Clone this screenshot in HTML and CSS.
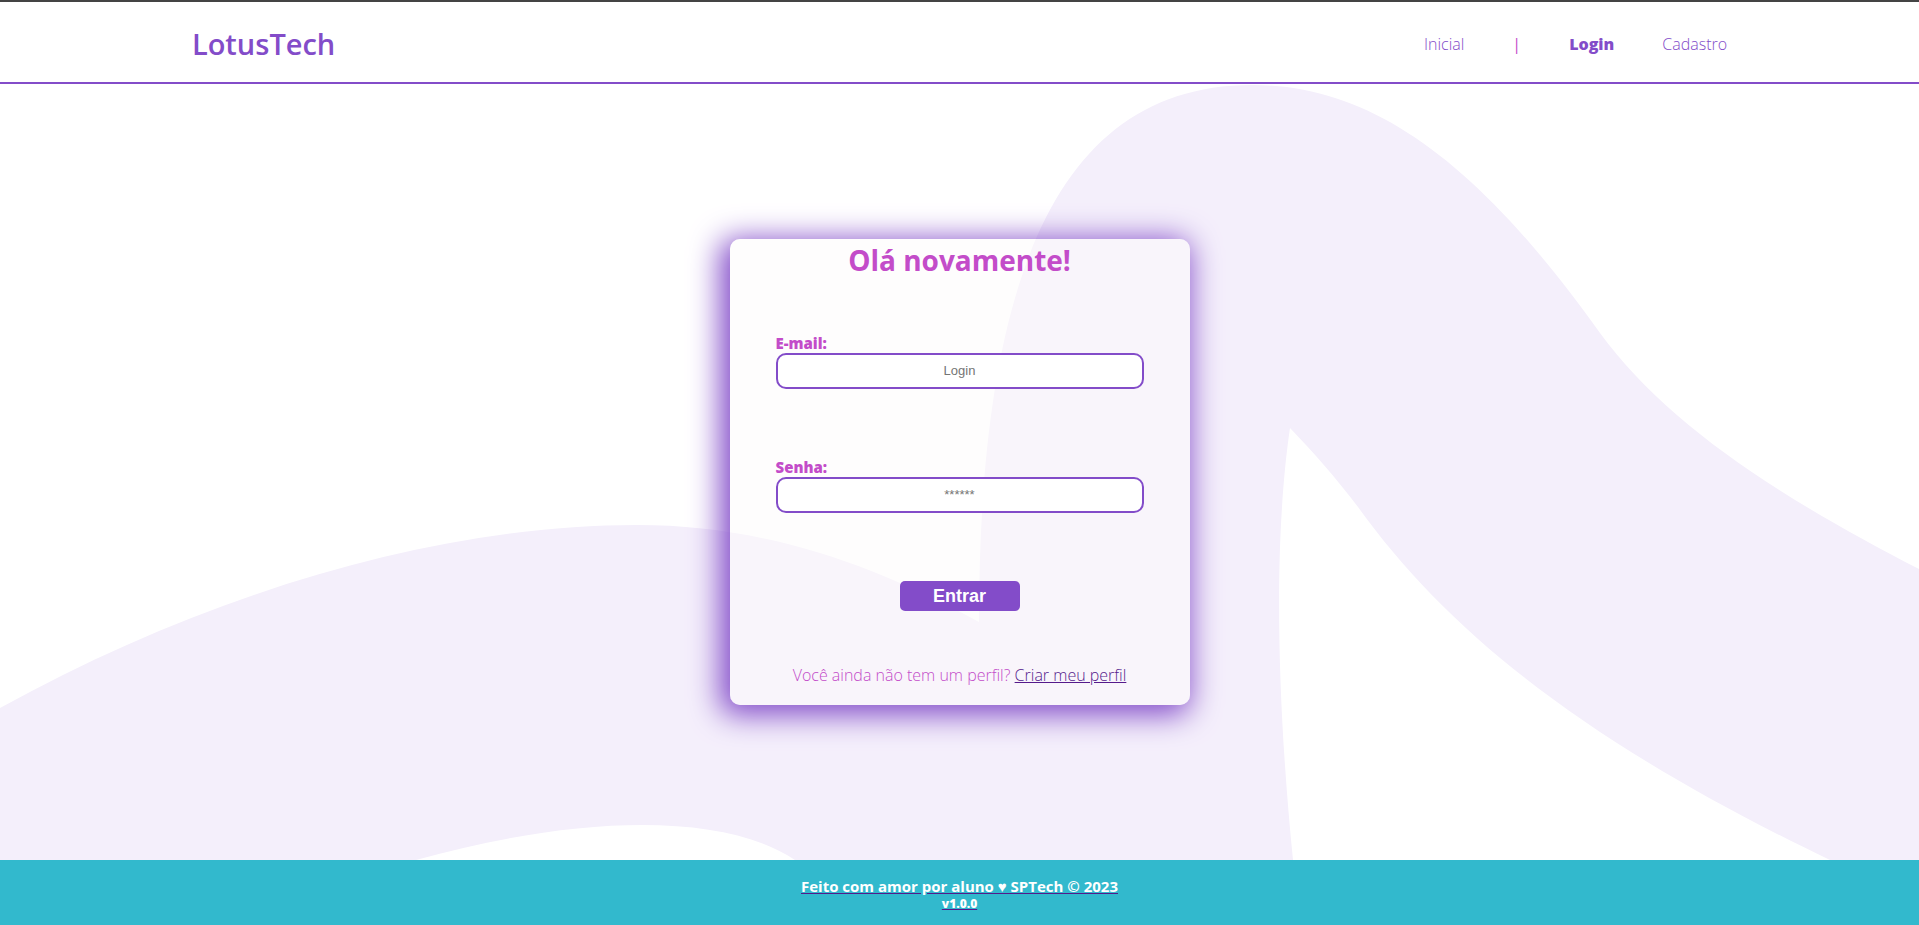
FILE: index.html
```html
<!DOCTYPE html>
<html lang="pt-br">
<head>
<meta charset="utf-8">
<meta name="viewport" content="width=device-width, initial-scale=1">
<title>LotusTech | Login</title>
<link rel="stylesheet" href="styles.css">
</head>
<body>
<header class="header">
  <div class="container">
    <h1 class="brand">LotusTech</h1>
    <nav class="navbar">
      <a href="#inicial">Inicial</a>
      <span class="divider">|</span>
      <a href="#login" class="active">Login</a>
      <a href="#cadastro">Cadastro</a>
    </nav>
  </div>
</header>
<main class="main">
  <svg class="waves" viewBox="0 84 1919 776" preserveAspectRatio="none" aria-hidden="true">
    <path fill-rule="evenodd" d="M0 708C210 592 440 525 637 525C760 525 870 562 979 622C979 290 1052 85 1252 85C1375 85 1480 165 1600 333C1665 422 1775 495 1919 569V860H1830C1590 745 1450 635 1358 507C1336 478 1314 453 1290 428C1275 530 1275 680 1293 860H795C720 810 570 817 416 860H0Z"/>
  </svg>
  <form class="card">
    <h2 class="title">Olá novamente!</h2>
    <div class="field">
      <label for="email">E-mail:</label>
      <input id="email" type="text" placeholder="Login">
    </div>
    <div class="field">
      <label for="senha">Senha:</label>
      <input id="senha" type="password" placeholder="******">
    </div>
    <button class="submit" type="button">Entrar</button>
    <p class="signup">Você ainda não tem um perfil? <a href="#cadastro">Criar meu perfil</a></p>
  </form>
</main>
<footer class="footer">
  <a href="#sobre">Feito com amor por aluno ♥ SPTech © 2023</a>
  <a href="#versao" class="version">v1.0.0</a>
</footer>
</body>
</html>
```

FILE: styles.css
```css
* {
  box-sizing: border-box;
  margin: 0;
  padding: 0;
}

body {
  min-height: 100vh;
  display: flex;
  flex-direction: column;
  background: #fff;
  font-family: "Open Sans", "Noto Sans", sans-serif;
  font-size: 16px;
  line-height: 20px;
}

.header {
  height: 84px;
  padding-top: 3px;
  border-top: 2px solid #444;
  border-bottom: 2px solid #834cc9;
}

.container {
  width: 80%;
  height: 100%;
  margin: 0 auto;
  display: flex;
  align-items: center;
  justify-content: space-between;
}

.brand {
  color: #834cc9;
  font-size: 29px;
  font-weight: 600;
  line-height: 36px;
}

.navbar {
  display: flex;
  gap: 48px;
  color: #c34cc9;
  font-weight: 300;
}

.navbar a {
  color: #834cc9;
  text-decoration: none;
}

.navbar .divider {
  font-weight: 400;
}

.navbar .active {
  font-weight: 800;
}

.main {
  position: relative;
  flex: 1;
  display: flex;
  align-items: center;
  justify-content: center;
}

.waves {
  position: absolute;
  inset: 0;
  width: 100%;
  height: 100%;
  fill: #f4effb;
}

.card {
  position: relative;
  width: 460px;
  padding-bottom: 20px;
  display: flex;
  flex-direction: column;
  align-items: center;
  color: #c34cc9;
  background: rgba(253, 251, 252, 0.5);
  border-radius: 10px;
  box-shadow: -5px 5px 30px 5px #834cc9;
}

.title {
  margin-bottom: 52px;
  font-size: 28px;
  font-weight: 700;
  line-height: 42px;
}

.field {
  width: 80%;
  margin-bottom: 68px;
  display: flex;
  flex-direction: column;
}

.field label {
  font-size: 15px;
  font-weight: 800;
}

.field input {
  height: 36px;
  padding-bottom: 2px;
  border: 2px solid #834cc9;
  border-radius: 10px;
  background: #fff;
  text-align: center;
  font-family: "Liberation Sans", Arial, sans-serif;
  font-size: 13px;
}

.field input::placeholder {
  color: #757575;
}

.submit {
  width: 120px;
  height: 30px;
  margin-bottom: 54px;
  border: 0;
  border-radius: 5px;
  color: #fff;
  background: #834cc9;
  font-family: "Liberation Sans", Arial, sans-serif;
  font-size: 18px;
  font-weight: 700;
}

.signup {
  font-weight: 300;
}

.signup a {
  color: #551a8b;
}

.footer {
  height: 65px;
  padding-top: 2px;
  display: flex;
  flex-direction: column;
  align-items: center;
  justify-content: center;
  background: #32b9cd;
  font-size: 15px;
  font-weight: 700;
}

.footer a {
  color: #fff;
  text-decoration-color: #551a8b;
}

.footer .version {
  font-size: 12px;
  font-weight: 800;
  line-height: 16px;
}
```
